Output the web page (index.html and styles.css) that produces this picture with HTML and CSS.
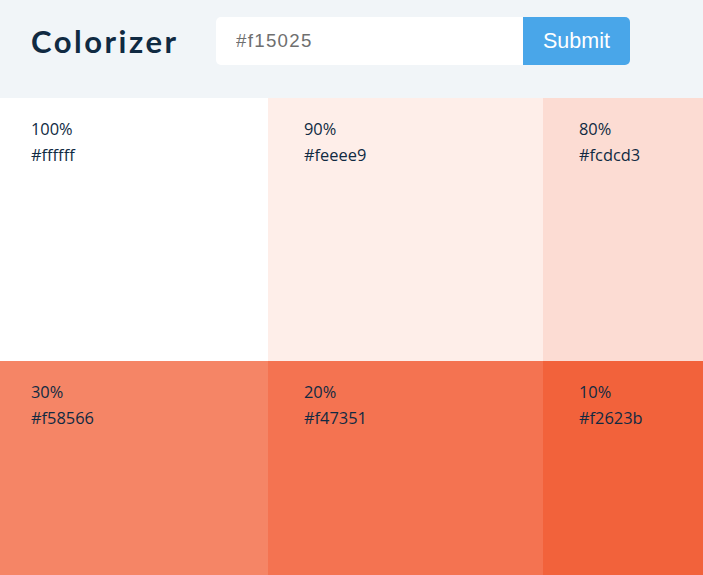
FILE: index.html
```html
<!DOCTYPE html>
<html lang="en">
<head>
<meta charset="utf-8">
<title>Colorizer</title>
<link rel="stylesheet" href="styles.css">
</head>
<body>
<section class="container">
  <h3 class="title">Colorizer</h3>
  <form class="search">
    <input type="text" class="search-input" placeholder="#f15025">
    <button type="submit" class="btn">Submit</button>
  </form>
</section>
<section class="colors">
  <article class="color" style="background-color:#ffffff"><p class="percent">100%</p><p class="hex">#ffffff</p></article>
  <article class="color" style="background-color:#feeee9"><p class="percent">90%</p><p class="hex">#feeee9</p></article>
  <article class="color" style="background-color:#fcdcd3"><p class="percent">80%</p><p class="hex">#fcdcd3</p></article>
  <article class="color" style="background-color:#fbcbbe"><p class="percent">70%</p><p class="hex">#fbcbbe</p></article>
  <article class="color" style="background-color:#f9b9a8"><p class="percent">60%</p><p class="hex">#f9b9a8</p></article>
  <article class="color" style="background-color:#f8a892"><p class="percent">50%</p><p class="hex">#f8a892</p></article>
  <article class="color" style="background-color:#f7967c"><p class="percent">40%</p><p class="hex">#f7967c</p></article>
  <article class="color" style="background-color:#f58566"><p class="percent">30%</p><p class="hex">#f58566</p></article>
  <article class="color" style="background-color:#f47351"><p class="percent">20%</p><p class="hex">#f47351</p></article>
  <article class="color" style="background-color:#f2623b"><p class="percent">10%</p><p class="hex">#f2623b</p></article>
  <article class="color" style="background-color:#f15025"><p class="percent">0%</p><p class="hex">#f15025</p></article>
  <article class="color" style="background-color:#d94821"><p class="percent">10%</p><p class="hex">#d94821</p></article>
  <article class="color" style="background-color:#c1401e"><p class="percent">20%</p><p class="hex">#c1401e</p></article>
  <article class="color" style="background-color:#a9381a"><p class="percent">30%</p><p class="hex">#a9381a</p></article>
</section>
</body>
</html>
```
FILE: styles.css
```css
html, body {
  margin: 0;
  padding: 0;
  overflow: hidden;
}
body {
  font-family: "Open Sans", "Noto Sans", sans-serif;
  color: #102a42;
  background: #ffffff;
}
.container {
  display: flex;
  align-items: center;
  height: 98px;
  box-sizing: border-box;
  padding: 17px 31px 33px;
  background: #f1f5f8;
}
.title {
  margin: 2px 0 0 0;
  width: 185px;
  flex: none;
  font-family: "Lato", sans-serif;
  font-weight: 700;
  font-size: 31px;
  line-height: 1.2;
  letter-spacing: 2.5px;
  color: #102a42;
}
.search {
  display: flex;
  margin: 0;
}
.search-input {
  width: 307px;
  height: 48px;
  box-sizing: border-box;
  border: none;
  border-radius: 5px 0 0 5px;
  padding: 0 20px;
  background: #ffffff;
  font-family: "Liberation Sans", Arial, sans-serif;
  font-size: 18.7px;
  letter-spacing: 1.3px;
  color: #333;
  outline: none;
}
.search-input::placeholder {
  color: #6f6f6f;
}
.btn {
  height: 48px;
  width: 107px;
  box-sizing: border-box;
  border: none;
  border-radius: 0 5px 5px 0;
  padding: 0;
  background: #49a6e9;
  color: #ffffff;
  font-family: "Liberation Sans", Arial, sans-serif;
  font-size: 21.5px;
  cursor: pointer;
}
.colors {
  display: grid;
  grid-template-columns: 268px repeat(6, 275px);
  grid-auto-rows: 263px;
  width: max-content;
}
.color {
  box-sizing: border-box;
  padding: 18px 0 0 36px;
  font-size: 16.4px;
  line-height: 26px;
}
.color:nth-child(7n+1) {
  padding-left: 31px;
}
.color p {
  margin: 0;
}
```
